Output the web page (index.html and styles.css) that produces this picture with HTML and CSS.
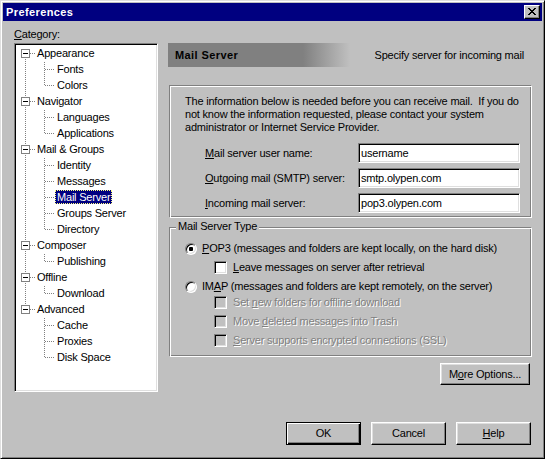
FILE: index.html
```html
<!DOCTYPE html>
<html lang="en">
<head>
<meta charset="utf-8">
<title>Preferences</title>
<link rel="stylesheet" href="styles.css">
</head>
<body>
<div class="window">
  <div class="titlebar">
    <span class="title">Preferences</span>
    <button class="close" aria-label="Close"><svg width="8" height="7" viewBox="0 0 8 7" shape-rendering="crispEdges"><path fill="#000" d="M0 0h2v1h-2z M6 0h2v1h-2z M1 1h2v1h-2z M5 1h2v1h-2z M2 2h4v1h-4z M3 3h2v1h-2z M2 4h4v1h-4z M1 5h2v1h-2z M5 5h2v1h-2z M0 6h2v1h-2z M6 6h2v1h-2z"/></svg></button>
  </div>
  <div class="body">
    <div class="main">
      <div class="cat-label"><u>C</u>ategory:</div>
      <div class="tree">
        <ul class="roots">
          <li>
            <div class="row root"><span class="exp"></span><span class="lbl">Appearance</span></div>
            <ul class="kids">
              <li class="row kid"><span class="lbl">Fonts</span></li>
              <li class="row kid"><span class="lbl">Colors</span></li>
            </ul>
          </li>
          <li>
            <div class="row root"><span class="exp"></span><span class="lbl">Navigator</span></div>
            <ul class="kids">
              <li class="row kid"><span class="lbl">Languages</span></li>
              <li class="row kid"><span class="lbl">Applications</span></li>
            </ul>
          </li>
          <li>
            <div class="row root"><span class="exp"></span><span class="lbl">Mail &amp; Groups</span></div>
            <ul class="kids">
              <li class="row kid"><span class="lbl">Identity</span></li>
              <li class="row kid"><span class="lbl">Messages</span></li>
              <li class="row kid"><span class="lbl sel">Mail Server</span></li>
              <li class="row kid"><span class="lbl">Groups Server</span></li>
              <li class="row kid"><span class="lbl">Directory</span></li>
            </ul>
          </li>
          <li>
            <div class="row root"><span class="exp"></span><span class="lbl">Composer</span></div>
            <ul class="kids">
              <li class="row kid"><span class="lbl">Publishing</span></li>
            </ul>
          </li>
          <li>
            <div class="row root"><span class="exp"></span><span class="lbl">Offline</span></div>
            <ul class="kids">
              <li class="row kid"><span class="lbl">Download</span></li>
            </ul>
          </li>
          <li>
            <div class="row root"><span class="exp"></span><span class="lbl">Advanced</span></div>
            <ul class="kids">
              <li class="row kid"><span class="lbl">Cache</span></li>
              <li class="row kid"><span class="lbl">Proxies</span></li>
              <li class="row kid"><span class="lbl">Disk Space</span></li>
            </ul>
          </li>
        </ul>
      </div>
      <div class="pane">
        <div class="pane-head"><span class="pane-title">Mail Server</span><span class="pane-desc">Specify server for incoming mail</span></div>
        <div class="group info">
          <p class="intro">The information below is needed before you can receive mail.&nbsp; If you do<br>not know the information requested, please contact your system<br>administrator or Internet Service Provider.</p>
          <div class="fields">
            <label class="f-label" for="user"><u>M</u>ail server user name:</label><input id="user" class="field" type="text" value="username">
            <label class="f-label" for="smtp"><u>O</u>utgoing mail (SMTP) server:</label><input id="smtp" class="field" type="text" value="smtp.olypen.com">
            <label class="f-label" for="pop"><u>I</u>ncoming mail server:</label><input id="pop" class="field" type="text" value="pop3.olypen.com">
          </div>
        </div>
        <div class="group type">
          <div class="legend">Mail Server Type</div>
          <div class="opt radio-row first"><span class="radio on"></span><span><u>P</u>OP3 (messages and folders are kept locally, on the hard disk)</span></div>
          <div class="opt check-row"><span class="check"></span><span><u>L</u>eave messages on server after retrieval</span></div>
          <div class="opt radio-row"><span class="radio"></span><span>IM<u>A</u>P (messages and folders are kept remotely, on the server)</span></div>
          <div class="opt check-row tight"><span class="check off"></span><span class="dis">Set <u>n</u>ew folders for offline download</span></div>
          <div class="opt check-row"><span class="check off"></span><span class="dis">Move <u>d</u>eleted messages into Trash</span></div>
          <div class="opt check-row"><span class="check off"></span><span class="dis"><u>S</u>erver supports encrypted connections (SSL)</span></div>
        </div>
        <button class="btn more">M<u>o</u>re Options...</button>
      </div>
    </div>
    <div class="actions">
      <button class="btn default">OK</button>
      <button class="btn">Cancel</button>
      <button class="btn"><u>H</u>elp</button>
    </div>
  </div>
</div>
</body>
</html>
```
FILE: styles.css
```css
* { box-sizing: border-box; }
html, body { margin: 0; padding: 0; }
body {
  font-family: "Liberation Sans", Arial, sans-serif;
  font-size: 11px;
  line-height: 13px;
  letter-spacing: -0.2px;
  color: #000;
  background: #c0c0c0;
}
.window {
  width: 545px;
  height: 459px;
  display: flex;
  flex-direction: column;
  background: #c0c0c0;
  border: 1px solid;
  border-color: #dfdfdf #000 #000 #dfdfdf;
  box-shadow: inset 1px 1px #fff, inset -1px -1px #808080;
  padding: 2px;
}
.titlebar {
  flex: none;
  height: 18px;
  background: #000080;
  display: flex;
  align-items: center;
  justify-content: space-between;
  padding: 0 2px 0 3px;
}
.title {
  color: #fff;
  font-weight: bold;
  letter-spacing: 0.4px;
}
.close {
  width: 16px;
  height: 14px;
  padding: 2px 0 0 3px;
  display: flex;
  align-items: flex-start;
  background: #c0c0c0;
  border: 1px solid;
  border-color: #fff #000 #000 #fff;
  box-shadow: inset -1px -1px #808080;
}
.close svg { display: block; }
.body {
  flex: 1;
  display: flex;
  flex-direction: column;
  padding: 7px 10px 0 11px;
}
.main {
  display: grid;
  grid-template-columns: 144px 364px;
  column-gap: 10px;
  row-gap: 2px;
}
.cat-label { grid-column: 1; grid-row: 1; height: 13px; }
.tree {
  grid-column: 1;
  grid-row: 2;
  height: 349px;
  background: #fff;
  border: 1px solid;
  border-color: #808080 #fff #fff #808080;
  box-shadow: inset 1px 1px #000, inset -1px -1px #dfdfdf;
  padding: 1px;
}
.roots {
  list-style: none;
  margin: 0;
  padding: 0;
  background: repeating-linear-gradient(to bottom, #808080 0 1px, transparent 1px 2px) 9px 8px / 1px 256px no-repeat;
}
.kids {
  list-style: none;
  margin: 0;
  padding: 0;
  background: repeating-linear-gradient(to bottom, #808080 0 1px, transparent 1px 2px) 28px 1px / 1px calc(100% - 9px) no-repeat;
}
.row {
  height: 16px;
  display: flex;
  align-items: flex-start;
}
.root {
  padding-left: 5px;
  background: repeating-linear-gradient(to right, #808080 0 1px, transparent 1px 2px) 14px 8px / 5px 1px no-repeat;
}
.exp {
  flex: none;
  width: 9px;
  height: 9px;
  margin-top: 4px;
  border: 1px solid #808080;
  background: linear-gradient(#000, #000) 1px 3px / 5px 1px no-repeat, #fff;
}
.root .lbl { margin-left: 5px; }
.kid {
  padding-left: 39px;
  background: repeating-linear-gradient(to right, #808080 0 1px, transparent 1px 2px) 29px 8px / 9px 1px no-repeat;
}
.lbl {
  height: 14px;
  line-height: 14px;
  margin-top: 1px;
  padding: 0 2px;
  white-space: nowrap;
}
.lbl.sel {
  background: #000080;
  color: #fff;
  outline: 1px dotted #ffff80;
  outline-offset: -1px;
}
.pane {
  grid-column: 2;
  grid-row: 2;
  display: flex;
  flex-direction: column;
}
.pane-head {
  height: 24px;
  display: flex;
  align-items: center;
  justify-content: space-between;
  padding: 0 8px 0 7px;
  background: linear-gradient(to right, #808080 135px, #c0c0c0 182px);
  white-space: nowrap;
}
.pane-title { font-weight: bold; letter-spacing: 0.4px; }
.group {
  margin-left: 1px;
  border: 1px solid;
  border-color: #808080 #fff #fff #808080;
  box-shadow: inset 1px 1px #fff, inset -1px -1px #808080;
}
.info {
  margin-top: 18px;
  height: 133px;
  padding: 9px 0 0 15px;
}
.intro { margin: 0; white-space: nowrap; }
.fields {
  display: grid;
  grid-template-columns: 153px 162px;
  grid-auto-rows: 20px;
  row-gap: 5px;
  align-items: center;
  margin: 9px 0 0 20px;
}
.f-label { white-space: nowrap; }
.field {
  width: 162px;
  height: 20px;
  margin: 0;
  padding: 0 2px;
  font: inherit;
  letter-spacing: inherit;
  color: #000;
  background: #fff;
  border: 1px solid;
  border-color: #808080 #fff #fff #808080;
  box-shadow: inset 1px 1px #000, inset -1px -1px #dfdfdf;
  outline: none;
}
.type {
  margin-top: 9px;
  height: 130px;
}
.legend {
  width: fit-content;
  margin: -8px 0 0 6px;
  padding: 0 2px;
  background: #c0c0c0;
  white-space: nowrap;
}
.opt {
  height: 19px;
  display: flex;
  align-items: center;
  white-space: nowrap;
}
.first { margin-top: 6px; }
.tight { margin-top: -3px; }
.radio-row { padding-left: 15px; gap: 5px; }
.check-row { padding-left: 44px; gap: 6px; }
.radio {
  flex: none;
  width: 12px;
  height: 12px;
  border-radius: 50%;
  border: 1px solid;
  border-color: #808080 #fff #fff #808080;
  box-shadow: inset 1px 1px #000, inset -1px -1px #dfdfdf;
  background: #fff;
}
.radio.on { background: radial-gradient(circle, #000 0 2px, #fff 2.5px); }
.check {
  flex: none;
  width: 13px;
  height: 13px;
  border: 1px solid;
  border-color: #808080 #fff #fff #808080;
  box-shadow: inset 1px 1px #000, inset -1px -1px #dfdfdf;
  background: #fff;
}
.check.off { background: #c0c0c0; }
.dis { color: #808080; text-shadow: 1px 1px 0 #fff; }
.btn {
  font: inherit;
  letter-spacing: inherit;
  color: #000;
  background: #c0c0c0;
  border: 1px solid;
  border-color: #fff #000 #000 #fff;
  box-shadow: inset -1px -1px #808080, inset 1px 1px #dfdfdf;
  padding: 0;
  width: 75px;
  height: 23px;
}
.btn.default {
  border-color: #000;
  box-shadow: inset 1px 1px #fff, inset -1px -1px #000, inset -2px -2px #808080;
}
.more {
  width: 90px;
  height: 22px;
  margin-top: 6px;
  margin-right: 2px;
  align-self: flex-end;
}
.actions {
  display: flex;
  justify-content: flex-end;
  gap: 10px;
  margin-top: 30px;
  padding-right: 1px;
}
```
